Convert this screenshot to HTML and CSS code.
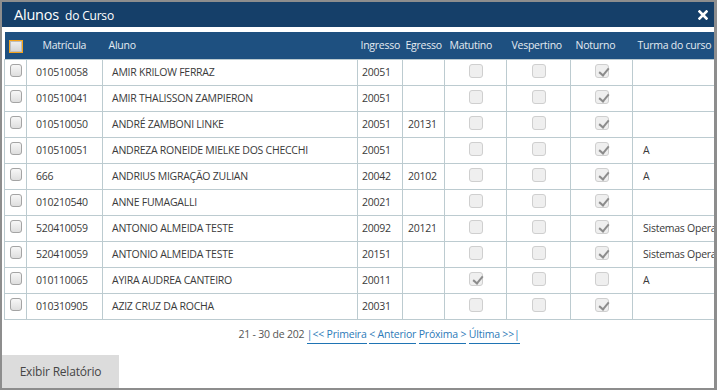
FILE: index.html
```html
<!DOCTYPE html>
<html lang="pt">
<head>
<meta charset="utf-8">
<title>Alunos do Curso</title>
<link rel="stylesheet" href="styles.css">
</head>
<body>
<div class="win">
  <div class="titlebar">
    <span class="t1">Alunos</span><span class="t2">do Curso</span>
    <svg class="close" width="10" height="10" viewBox="0 0 10 10"><path d="M1.5 1.5 L8.5 8.5 M8.5 1.5 L1.5 8.5" stroke="#fff" stroke-width="2.6" stroke-linecap="square"/></svg>
  </div>
  <div class="content">
    <div class="wide">
      <table class="grid">
        <colgroup>
          <col class="c-sel"><col class="c-mat"><col class="c-alu"><col class="c-ing"><col class="c-egr"><col class="c-mt"><col class="c-vs"><col class="c-nt"><col class="c-tur">
        </colgroup>
        <thead>
          <tr>
            <th class="h-sel"><span class="hcb"></span></th>
            <th class="h-mat">Matrícula</th>
            <th class="h-alu">Aluno</th>
            <th class="h-ing">Ingresso</th>
            <th class="h-egr">Egresso</th>
            <th class="h-mt">Matutino</th>
            <th class="h-vs">Vespertino</th>
            <th class="h-nt">Noturno</th>
            <th class="h-tur">Turma do curso</th>
          </tr>
        </thead>
        <tbody>
          <tr><td class="sel"><span class="rcb"></span></td><td class="mat">010510058</td><td class="alu">AMIR KRILOW FERRAZ</td><td class="ing">20051</td><td class="egr"></td><td class="ck"><span class="cb"></span></td><td class="ck"><span class="cb"></span></td><td class="ck"><span class="cb on"></span></td><td class="tur"></td></tr>
          <tr><td class="sel"><span class="rcb"></span></td><td class="mat">010510041</td><td class="alu">AMIR THALISSON ZAMPIERON</td><td class="ing">20051</td><td class="egr"></td><td class="ck"><span class="cb"></span></td><td class="ck"><span class="cb"></span></td><td class="ck"><span class="cb on"></span></td><td class="tur"></td></tr>
          <tr><td class="sel"><span class="rcb"></span></td><td class="mat">010510050</td><td class="alu">ANDRÉ ZAMBONI LINKE</td><td class="ing">20051</td><td class="egr">20131</td><td class="ck"><span class="cb"></span></td><td class="ck"><span class="cb"></span></td><td class="ck"><span class="cb on"></span></td><td class="tur"></td></tr>
          <tr><td class="sel"><span class="rcb"></span></td><td class="mat">010510051</td><td class="alu">ANDREZA RONEIDE MIELKE DOS CHECCHI</td><td class="ing">20051</td><td class="egr"></td><td class="ck"><span class="cb"></span></td><td class="ck"><span class="cb"></span></td><td class="ck"><span class="cb on"></span></td><td class="tur">A</td></tr>
          <tr><td class="sel"><span class="rcb"></span></td><td class="mat">666</td><td class="alu">ANDRIUS MIGRAÇÃO ZULIAN</td><td class="ing">20042</td><td class="egr">20102</td><td class="ck"><span class="cb"></span></td><td class="ck"><span class="cb"></span></td><td class="ck"><span class="cb on"></span></td><td class="tur">A</td></tr>
          <tr><td class="sel"><span class="rcb"></span></td><td class="mat">010210540</td><td class="alu">ANNE FUMAGALLI</td><td class="ing">20021</td><td class="egr"></td><td class="ck"><span class="cb"></span></td><td class="ck"><span class="cb"></span></td><td class="ck"><span class="cb on"></span></td><td class="tur"></td></tr>
          <tr><td class="sel"><span class="rcb"></span></td><td class="mat">520410059</td><td class="alu">ANTONIO ALMEIDA TESTE</td><td class="ing">20092</td><td class="egr">20121</td><td class="ck"><span class="cb"></span></td><td class="ck"><span class="cb"></span></td><td class="ck"><span class="cb on"></span></td><td class="tur">Sistemas Operacionais</td></tr>
          <tr><td class="sel"><span class="rcb"></span></td><td class="mat">520410059</td><td class="alu">ANTONIO ALMEIDA TESTE</td><td class="ing">20151</td><td class="egr"></td><td class="ck"><span class="cb"></span></td><td class="ck"><span class="cb"></span></td><td class="ck"><span class="cb on"></span></td><td class="tur">Sistemas Operacionais</td></tr>
          <tr><td class="sel"><span class="rcb"></span></td><td class="mat">010110065</td><td class="alu">AYIRA AUDREA CANTEIRO</td><td class="ing">20011</td><td class="egr"></td><td class="ck"><span class="cb on"></span></td><td class="ck"><span class="cb"></span></td><td class="ck"><span class="cb"></span></td><td class="tur">A</td></tr>
          <tr><td class="sel"><span class="rcb"></span></td><td class="mat">010310905</td><td class="alu">AZIZ CRUZ DA ROCHA</td><td class="ing">20031</td><td class="egr"></td><td class="ck"><span class="cb"></span></td><td class="ck"><span class="cb"></span></td><td class="ck"><span class="cb on"></span></td><td class="tur"></td></tr>
        </tbody>
      </table>
      <div class="pager">
        <span class="count">21 - 30 de 202</span>
        <a class="pl" href="#">|&lt;&lt; Primeira</a>
        <a class="pl" href="#">&lt; Anterior</a>
        <a class="pl" href="#">Próxima &gt;</a>
        <a class="pl" href="#">Última &gt;&gt;|</a>
      </div>
    </div>
    <div class="actions">
      <button class="btn">Exibir Relatório</button>
    </div>
  </div>
</div>
</body>
</html>
```

FILE: styles.css
```css
* { box-sizing: border-box; }
html, body { margin: 0; padding: 0; background: #fff; }
body { font-family: "Open Sans", "Noto Sans", sans-serif; color: #333; }

.win {
  width: 717px;
  height: 390px;
  border: 2px solid #8d8d8d;
  border-right-width: 3px;
  overflow: hidden;
  display: flex;
  flex-direction: column;
  background: #fff;
}

.titlebar {
  height: 25px;
  flex: none;
  background: #153f69;
  color: #fff;
  display: flex;
  align-items: center;
  padding-left: 12px;
  padding-right: 6px;
}
.t1 { font-size: 14.5px; letter-spacing: -0.2px; margin-right: 6px; }
.t2 { font-size: 12px; letter-spacing: -0.2px; margin-top: 2px; }
.close { margin-left: auto; }

.content {
  flex: 1;
  display: flex;
  flex-direction: column;
  padding-top: 5px;
  padding-left: 2px;
}
.wide { width: 750px; flex: none; }

.grid {
  width: 750px;
  table-layout: fixed;
  border-collapse: collapse;
  font-size: 10.5px;
  letter-spacing: -0.25px;
}
.c-sel { width: 22px; }
.c-mat { width: 76px; }
.c-alu { width: 255px; }
.c-ing { width: 45px; }
.c-egr { width: 42px; }
.c-mt { width: 62px; }
.c-vs { width: 64px; }
.c-nt { width: 62px; }
.c-tur { width: 122px; }

.grid thead tr { background: #1e5080; height: 27px; }
.grid th {
  color: #e4ebf2;
  font-weight: normal;
  text-align: left;
  white-space: nowrap;
  padding: 0;
  border: none;
}
.h-sel { text-align: center !important; }
.h-mat { padding-left: 16px !important; }
.h-alu { padding-left: 6px !important; }
.h-ing { padding-left: 3px !important; }
.h-egr { padding-left: 3px !important; }
.h-mt { padding-left: 5px !important; }
.h-vs { padding-left: 5px !important; }
.h-nt { padding-left: 5px !important; }
.h-tur { padding-left: 5px !important; }

.hcb {
  display: inline-block;
  width: 14px;
  height: 13px;
  border: 1px solid #f5a41c;
  background: linear-gradient(#eeeeee, #d4d4d4);
  box-shadow: inset 0 0 0 1px #bdbdbd;
  vertical-align: middle;
}

.grid td {
  height: 26px;
  border: 1px solid #bccbd0;
  padding: 0;
  color: #3a3a3a;
  white-space: nowrap;
  overflow: hidden;
}
.grid td.sel { text-align: center; padding-left: 1px; }
.grid td.mat { padding-left: 9px; }
.grid td.alu { padding-left: 9px; }
.grid td.ing { padding-left: 4px; }
.grid td.egr { padding-left: 5px; }
.grid td.ck { text-align: center; }
.grid td.tur { padding-left: 10px; }

.rcb {
  display: inline-block;
  width: 12px;
  height: 13px;
  border: 1px solid #a4a4a4;
  border-radius: 3px;
  background: linear-gradient(#f7f7f7, #dedede);
  vertical-align: middle;
  margin-top: -6px;
}
.cb {
  display: inline-block;
  width: 14px;
  height: 14px;
  border: 1px solid #cfcfcf;
  border-radius: 3px;
  background: #efefef;
  vertical-align: middle;
  margin-top: -5px;
  position: relative;
}
.cb.on::after {
  content: "";
  position: absolute;
  left: 5px;
  top: 1px;
  width: 4px;
  height: 8px;
  border-right: 2px solid #8c8c8c;
  border-bottom: 2px solid #8c8c8c;
  transform: rotate(40deg);
}

.pager {
  text-align: center;
  font-size: 10.5px;
  letter-spacing: -0.2px;
  color: #555;
  padding-top: 7px;
  height: 30px;
}
.pl {
  color: #2c7ab8;
  text-decoration: none;
  border-bottom: 1px solid #1f74b4;
  padding-bottom: 2px;
}

.actions { margin-top: auto; }
.btn {
  display: block;
  width: 117px;
  height: 33px;
  margin-left: -2px;
  border: none;
  background: #dcdcdc;
  color: #454545;
  font-family: "Open Sans", "Noto Sans", sans-serif;
  font-size: 12px;
  letter-spacing: -0.2px;
  padding: 0;
}
```
